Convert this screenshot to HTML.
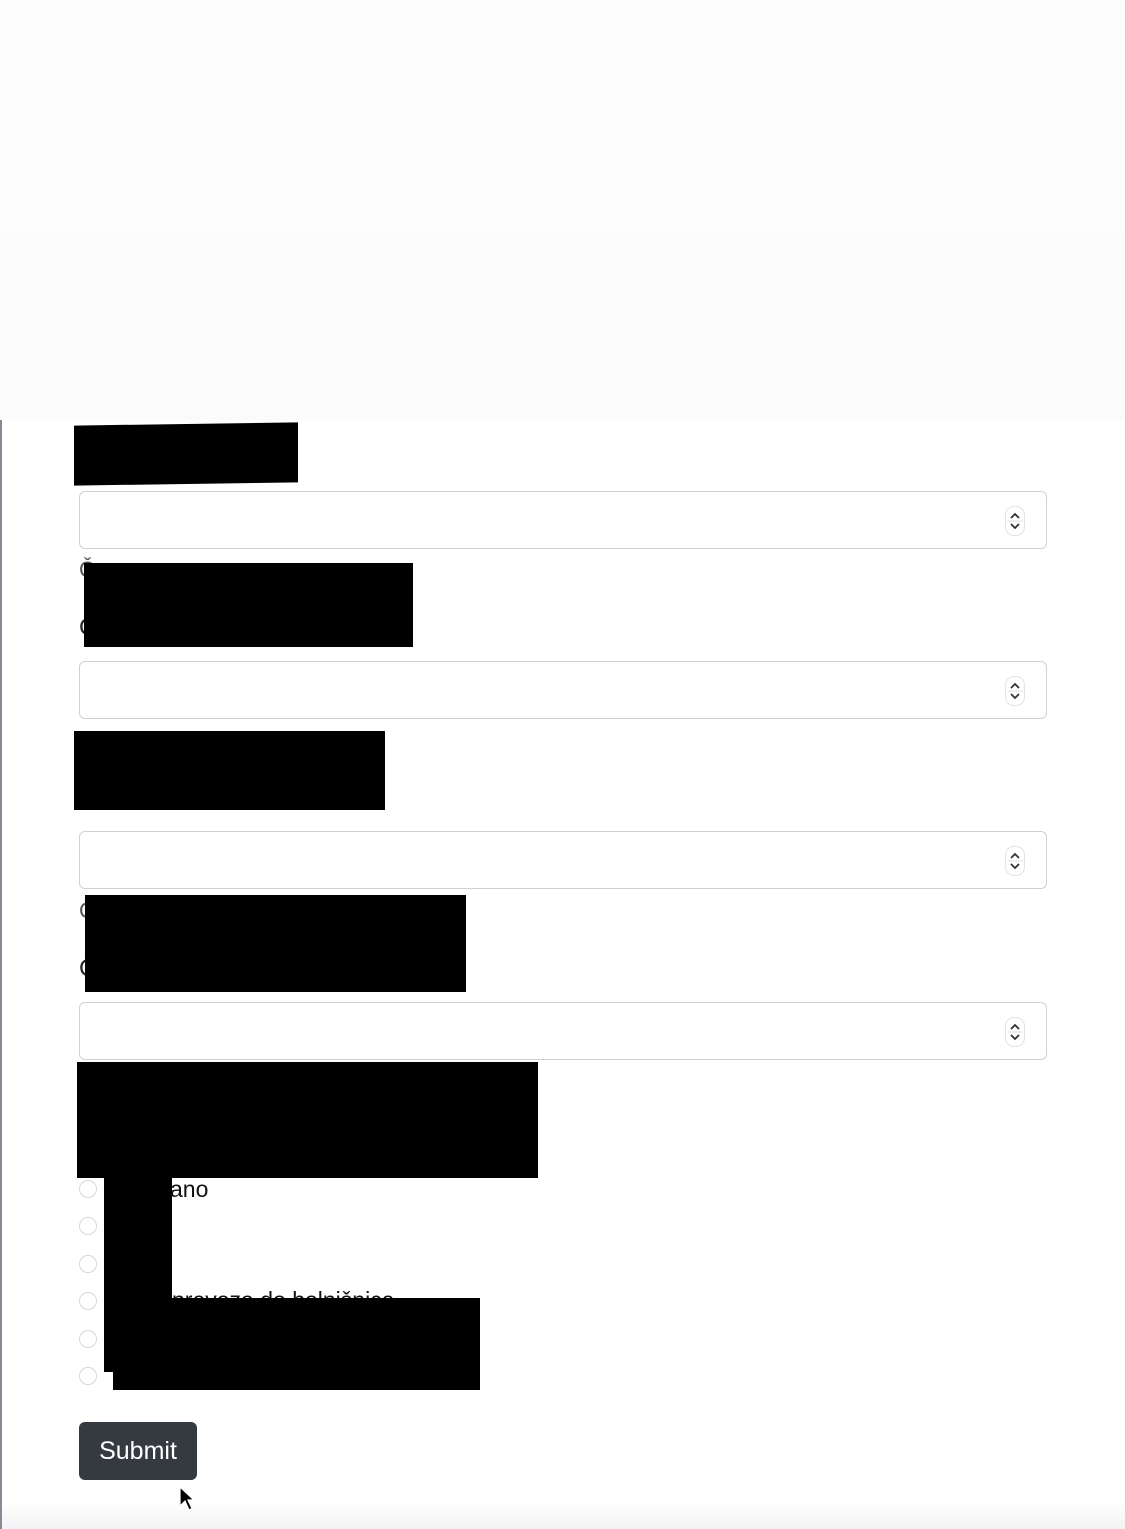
<!DOCTYPE html>
<html><head><meta charset="utf-8"><style>
html,body{margin:0;padding:0;}
body{width:1125px;height:1529px;position:relative;overflow:hidden;background:#fff;font-family:"Liberation Sans",Arial,sans-serif;}
.a{position:absolute;}
.blk{position:absolute;background:#000;}
.inp{position:absolute;left:79px;width:966px;height:56px;border:1px solid #cfd0d4;border-radius:6px;background:#fff;}
.spin{position:absolute;right:21px;top:14px;width:18px;height:28px;border:1px solid #e2e2e2;border-radius:9px;}
.radio{position:absolute;left:79px;width:16px;height:16px;border:1px solid #d8d8d8;border-radius:50%;background:#fff;}
</style></head><body>
<div class="a" style="left:0;top:0;width:1125px;height:232px;background:#fdfdfd"></div>
<div class="a" style="left:0;top:232px;width:1125px;height:188px;background:#fbfbfb"></div>
<div class="a" style="left:0;top:420px;width:2px;height:1109px;background:#8a8894"></div>
<div class="a" style="left:2px;top:1500px;width:1123px;height:29px;background:linear-gradient(#fff,#f3f3f5)"></div>

<div class="blk" style="left:74px;top:424px;width:224px;height:60px;transform:skewY(-0.8deg)"></div>

<div class="inp" style="top:491px"><div class="spin"><svg width="18" height="28" viewBox="0 0 18 28"><path d="M5 11 L9 7 L13 11 M5 17 L9 21 L13 17" fill="none" stroke="#333" stroke-width="1.8"/><line x1="1" y1="14" x2="17" y2="14" stroke="#e2e2e2"/></svg></div></div>
<div class="a" style="left:79px;top:557px;font-size:22px;color:#555">Č</div>
<div class="a" style="left:79px;top:614px;font-size:24px;color:#222">C</div>
<div class="blk" style="left:84px;top:563px;width:329px;height:84px"></div>

<div class="inp" style="top:661px"><div class="spin"><svg width="18" height="28" viewBox="0 0 18 28"><path d="M5 11 L9 7 L13 11 M5 17 L9 21 L13 17" fill="none" stroke="#333" stroke-width="1.8"/><line x1="1" y1="14" x2="17" y2="14" stroke="#e2e2e2"/></svg></div></div>
<div class="blk" style="left:74px;top:731px;width:311px;height:79px"></div>

<div class="inp" style="top:831px"><div class="spin"><svg width="18" height="28" viewBox="0 0 18 28"><path d="M5 11 L9 7 L13 11 M5 17 L9 21 L13 17" fill="none" stroke="#333" stroke-width="1.8"/><line x1="1" y1="14" x2="17" y2="14" stroke="#e2e2e2"/></svg></div></div>
<div class="a" style="left:79px;top:898px;font-size:22px;color:#555">C</div>
<div class="a" style="left:79px;top:955px;font-size:24px;color:#222">C</div>
<div class="blk" style="left:85px;top:895px;width:381px;height:97px"></div>

<div class="inp" style="top:1002px"><div class="spin"><svg width="18" height="28" viewBox="0 0 18 28"><path d="M5 11 L9 7 L13 11 M5 17 L9 21 L13 17" fill="none" stroke="#333" stroke-width="1.8"/><line x1="1" y1="14" x2="17" y2="14" stroke="#e2e2e2"/></svg></div></div>
<div class="blk" style="left:77px;top:1062px;width:461px;height:116px"></div>

<div class="radio" style="top:1180px"></div>
<div class="radio" style="top:1217px"></div>
<div class="radio" style="top:1255px"></div>
<div class="radio" style="top:1292px"></div>
<div class="radio" style="top:1330px"></div>
<div class="radio" style="top:1367px"></div>
<div class="a" style="left:170px;top:1176px;font-size:23px;color:#111">ano</div>
<div class="a" style="left:172px;top:1287px;font-size:23px;color:#111">prevoza do bolnišnice</div>
<div class="blk" style="left:104px;top:1178px;width:68px;height:194px"></div>
<div class="blk" style="left:113px;top:1298px;width:367px;height:92px"></div>

<div class="a" style="left:79px;top:1422px;width:118px;height:58px;background:#343a40;border-radius:6px;color:#fff;font-size:25px;line-height:58px;text-align:center">Submit</div>
<svg class="a" style="left:178px;top:1486px" width="18" height="28" viewBox="0 0 18 28"><path d="M2 1 L2 20 L7 15 L11 24 L14 22.5 L10 14 L16 14 Z" fill="#000" stroke="#fff" stroke-width="1.2"/></svg>
</body></html>
